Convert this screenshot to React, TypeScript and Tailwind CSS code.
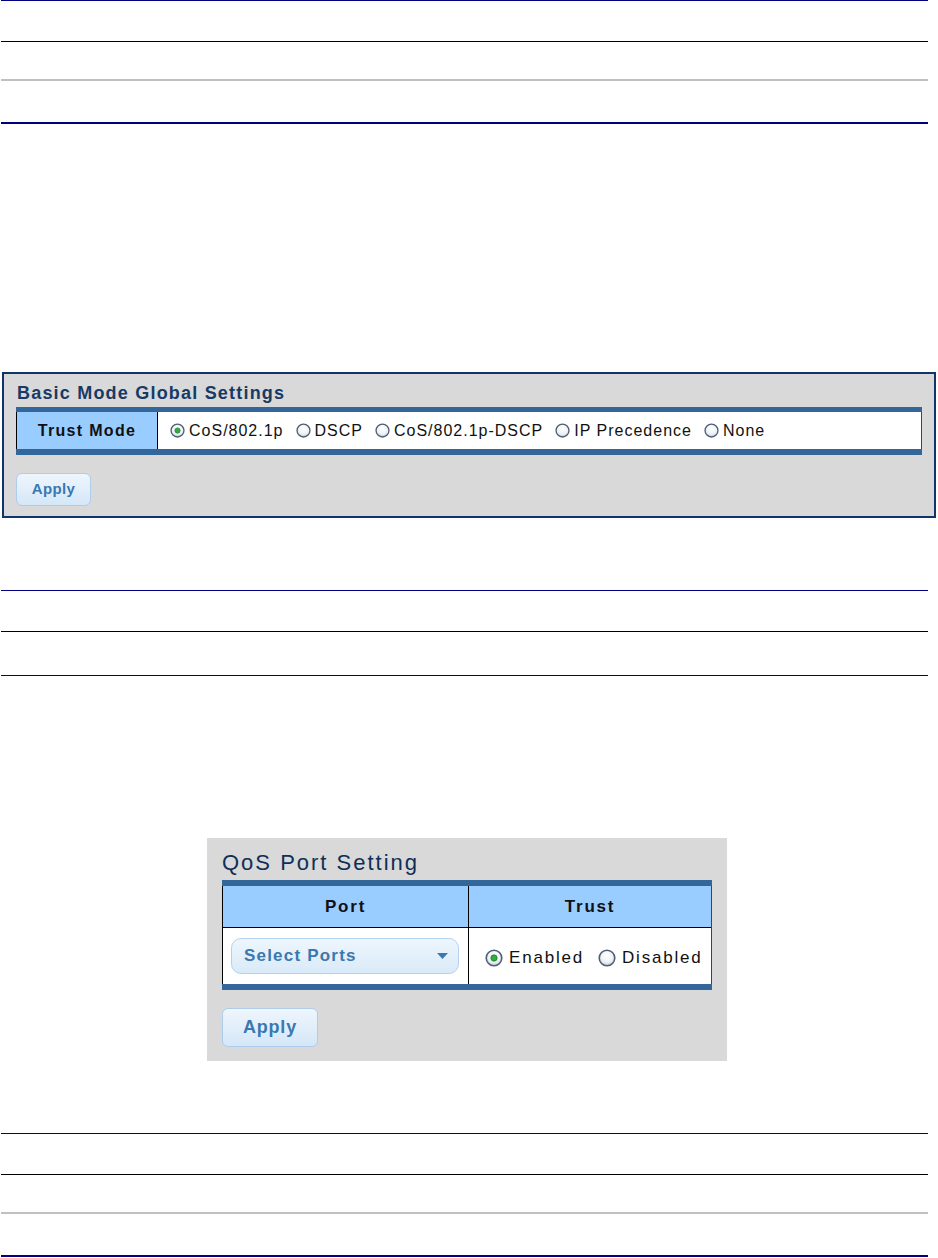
import React from 'react';

const font = "font-['Liberation_Sans',Arial,Helvetica,sans-serif]";

function Radio({ checked = false, size = 14 }: { checked?: boolean; size?: number }) {
  return (
    <svg width={size} height={size} viewBox="0 0 16 16" className="shrink-0">
      <defs>
        <radialGradient id="radioFill" cx="50%" cy="35%" r="65%">
          <stop offset="0%" stopColor="#ffffff" />
          <stop offset="65%" stopColor="#eef1f5" />
          <stop offset="100%" stopColor="#c3ccd8" />
        </radialGradient>
      </defs>
      <circle cx="8" cy="8" r="6.9" fill="url(#radioFill)" stroke="#4d5e74" strokeWidth="1.4" />
      {checked && <circle cx="8" cy="8" r="2.8" fill="#2fae3f" stroke="#1f7a2c" strokeWidth="0.7" />}
    </svg>
  );
}

function Rule({ color, thick, gap }: { color: 'navy' | 'black' | 'gray'; thick?: boolean; gap: string }) {
  const bg = color === 'navy' ? 'bg-[#000080]' : color === 'black' ? 'bg-black' : 'bg-[#c0c0c0]';
  return <div className={`${gap} ml-[1px] w-[927px] ${thick ? 'h-[2px]' : 'h-px'} ${bg}`} />;
}

function ApplyButton({ big }: { big?: boolean }) {
  return (
    <button
      className={`block rounded-md border border-[#aecdec] bg-linear-to-b from-[#eef6fd] via-[#e2eefa] to-[#d4e7f8] font-bold text-[#3a78b0] ${
        big ? 'mt-[18px] h-[39px] w-[96px] text-[18px] tracking-[0.8px]' : 'mt-[18px] h-[33px] w-[75px] text-[15px] tracking-[0.4px]'
      }`}
    >
      Apply
    </button>
  );
}

const trustModes = ['CoS/802.1p', 'DSCP', 'CoS/802.1p-DSCP', 'IP Precedence', 'None'];

export default function App() {
  return (
    <div className={`${font} w-[938px] min-h-[1258px] bg-white text-[#111]`}>
      <Rule color="navy" gap="mt-0" />
      <Rule color="black" gap="mt-[40px]" />
      <Rule color="gray" thick gap="mt-[37px]" />
      <Rule color="navy" thick gap="mt-[41px]" />

      {/* Basic mode global settings */}
      <section className="ml-[2px] mt-[248px] w-[934px] border-2 border-[#10356a] bg-[#d9d9d9] px-3 pt-[9px] pb-[10px]">
        <h2 className="pl-px text-[18px] font-bold leading-[20px] tracking-[1.2px] text-[#173a66]">
          Basic Mode Global Settings
        </h2>
        <div className="mt-1 border-t-[5px] border-b-[6px] border-[#336699]">
          <div className="flex h-[37px] border-l border-r border-l-black border-r-[#444] bg-white">
            <div className="flex w-[141px] items-center justify-center border-r border-black bg-[#99ccff] text-[16px] font-bold tracking-[1.3px]">
              Trust Mode
            </div>
            <div className="flex items-center gap-3 pl-3 text-[16px] tracking-[1px]">
              {trustModes.map((m, i) => (
                <label key={m} className="flex items-center gap-1">
                  <Radio checked={i === 0} size={15} />
                  <span>{m}</span>
                </label>
              ))}
            </div>
          </div>
        </div>
        <ApplyButton />
      </section>

      <Rule color="navy" gap="mt-[72px]" />
      <Rule color="black" gap="mt-[40px]" />
      <Rule color="navy" gap="mt-[43px]" />

      {/* QoS port setting */}
      <section className="ml-[207px] mt-[162px] w-[520px] bg-[#d9d9d9] px-[15px] pt-[12px] pb-[14px]">
        <h2 className="text-[22px] leading-[26px] tracking-[2px] text-[#0f2f57]">QoS Port Setting</h2>
        <div className="mt-1 border-t-[6px] border-b-[6px] border-[#336699]">
          <div className="grid grid-cols-[246px_1fr] border-l border-r border-l-black border-r-[#444]">
            <div className="flex h-[42px] items-center justify-center border-r border-b border-black bg-[#99ccff] text-[17px] font-bold tracking-[1.8px]">
              Port
            </div>
            <div className="flex h-[42px] items-center justify-center border-b border-black bg-[#99ccff] text-[17px] font-bold tracking-[1.8px]">
              Trust
            </div>
            <div className="flex h-[56px] items-center border-r border-black bg-white pl-2 pr-[9px]">
              <div className="flex h-[36px] w-full items-center justify-between rounded-[10px] border border-[#b3d2ef] bg-linear-to-b from-[#eef6fd] to-[#d9eaf8] pl-[12px] pr-[10px]">
                <span className="text-[17px] font-bold tracking-[1.2px] text-[#3a78b0]">Select Ports</span>
                <svg width="11" height="6" viewBox="0 0 11 6">
                  <path d="M0 0 H11 L5.5 6 Z" fill="#3a78b0" />
                </svg>
              </div>
            </div>
            <div className="flex h-[56px] items-center gap-[14px] bg-white pl-4 pt-[4px] text-[17px] tracking-[1.8px]">
              <label className="flex items-center gap-[6px]">
                <Radio checked size={18} />
                <span>Enabled</span>
              </label>
              <label className="flex items-center gap-[6px]">
                <Radio size={18} />
                <span>Disabled</span>
              </label>
            </div>
          </div>
        </div>
        <ApplyButton big />
      </section>

      <Rule color="navy" gap="mt-[72px]" />
      <Rule color="black" gap="mt-[40px]" />
      <Rule color="gray" thick gap="mt-[37px]" />
      <Rule color="navy" thick gap="mt-[41px]" />
    </div>
  );
}
